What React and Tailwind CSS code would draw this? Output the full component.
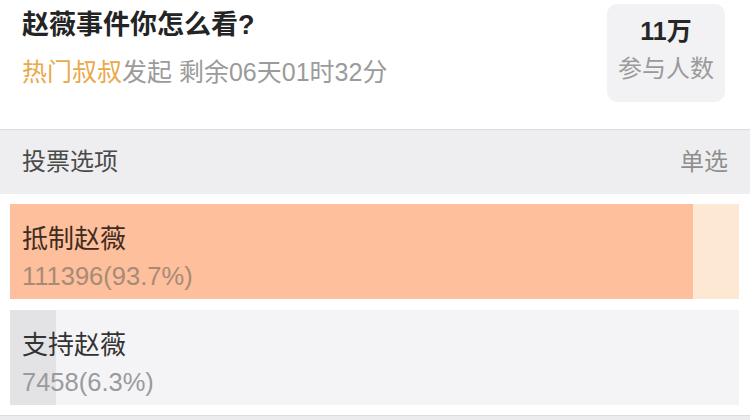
import React from "react";

const options = [
  { name: "抵制赵薇", count: "111396", pct: 93.7, fill: "#fdbf9c", bg: "#fde8d3", nameColor: "#3f2c22", numColor: "#a88a78" },
  { name: "支持赵薇", count: "7458", pct: 6.3, fill: "#e3e3e6", bg: "#f4f4f6", nameColor: "#333333", numColor: "#9a9a9c" },
];

export default function App() {
  return (
    <div
      className="w-[750px] h-[420px] overflow-hidden bg-white"
      style={{ fontFamily: '"Liberation Sans", "Noto Sans CJK SC", sans-serif' }}
    >
      <div className="flex h-[129px] items-start justify-between pl-[22px] pr-[25px]">
        <div className="pt-[7px]">
          <div className="text-[27px] leading-[36px] font-bold text-[#242424]">赵薇事件你怎么看?</div>
          <div className="mt-[12px] text-[25px] leading-[34px] text-[#9b9b9b]">
            <span className="text-[#eaa94a]">热门叔叔</span>发起 剩余06天01时32分
          </div>
        </div>
        <div className="mt-[4px] flex h-[98px] w-[118px] flex-col items-center rounded-[10px] bg-[#f2f2f4] pt-[13px]">
          <div className="text-[25px] leading-[28px] font-bold text-[#262626]">11万</div>
          <div className="mt-[10px] text-[24px] leading-[28px] text-[#9a9a9a]">参与人数</div>
        </div>
      </div>
      <div className="flex h-[65px] items-center justify-between border-t border-[#dcdcde] bg-[#eeeef0] pl-[22px] pr-[22px]">
        <span className="text-[24px] leading-[30px] text-[#4a4a4a]">投票选项</span>
        <span className="text-[24px] leading-[30px] text-[#8e8e8e]">单选</span>
      </div>
      <div className="flex flex-col gap-[11px] bg-white px-[10px] pt-[10px] pb-[10px] pr-[11px]">
        {options.map((o) => (
          <div key={o.name} className="relative h-[95px]" style={{ backgroundColor: o.bg }}>
            <div className="absolute left-0 top-0 h-full" style={{ width: `${o.pct}%`, backgroundColor: o.fill }} />
            <div className="relative pl-[12px] pt-[20px]">
              <div className="text-[26px] leading-[30px]" style={{ color: o.nameColor }}>{o.name}</div>
              <div className="mt-[7px] text-[25.5px] leading-[30px]" style={{ color: o.numColor }}>
                {o.count}({o.pct}%)
              </div>
            </div>
          </div>
        ))}
      </div>
      <div className="h-[10px] border-t border-[#dedee0] bg-[#ececee]" />
    </div>
  );
}
